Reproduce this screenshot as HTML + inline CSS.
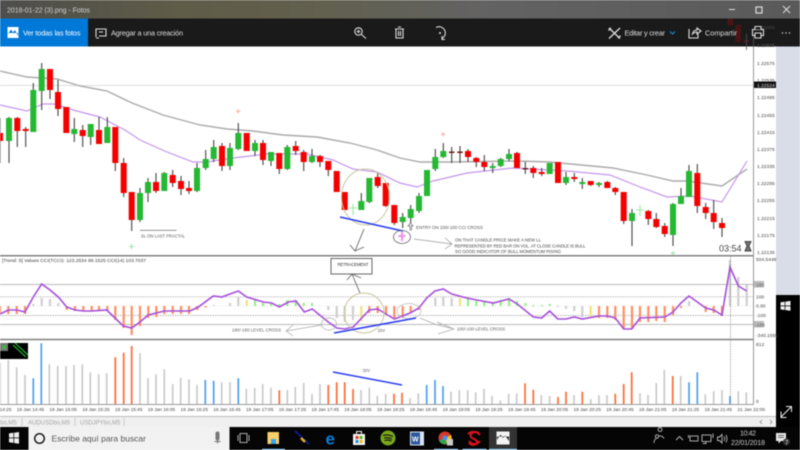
<!DOCTYPE html>
<html lang="es"><head><meta charset="utf-8"><title>2018-01-22 (3).png - Fotos</title>
<style>
html,body{margin:0;padding:0;width:800px;height:450px;overflow:hidden;background:#fff}
svg{display:block;filter:blur(.5px)}
text{font-family:"Liberation Sans",sans-serif}
</style></head><body>
<svg xmlns="http://www.w3.org/2000/svg" width="800" height="450" viewBox="0 0 800 450">
<defs><linearGradient id="tb" x1="0" x2="1" y1="0" y2="0"><stop offset="0" stop-color="#4e4e4c"/><stop offset=".22" stop-color="#5f5c48"/><stop offset=".4" stop-color="#62604e"/><stop offset=".6" stop-color="#636363"/><stop offset="1" stop-color="#5a5a5a"/></linearGradient></defs>
<rect width="800" height="450" fill="#fff"/>
<!-- side -->
<rect x="776" y="46" width="24" height="249" fill="#d9dde8"/>
<rect x="776" y="295" width="24" height="132" fill="#000"/>
<rect x="0" y="417" width="776" height="10" fill="#f0f0f0"/>
<!-- main lines -->
<path d="M0 85.5H753" stroke="#dcdcdc" stroke-width="1"/>
<polyline fill="none" stroke="#aaa" stroke-width="1.4" points="0,71 27,77 42,78 57,79 80,86 107,91 132,103 163,115 200,125 227,129 253,131 283,135 317,137 350,143 377,150 400,158 420,162 450,162 517,161 550,162 613,168 647,175 673,181 687,181 722,186 747,169"/>
<polyline fill="none" stroke="#c496ea" stroke-width="1.200" points="0,105 27,111 43,104 55,104 73,110 100,117 125,130 140,140 167,152 193,162 207,162 233,158 267,154 307,154 333,160 353,169 377,172 400,183 417,187 433,181 467,173 513,168 567,171 610,175 640,187 667,197 690,196 722,202 747,161"/>
<!-- wicks -->
<path fill="none" stroke="#444" stroke-width="1.100" d="M0 118V163M9 117V163M17.3 117V147M25.7 127V147M33.3 83V132M41.7 63V110M50 69V99M58 80V116M66.3 107V133M74.3 118V142M82.7 125V147M90.7 126V145M99 117V144M107.3 117V143M115.3 127V171M123.7 158V197M131.7 192V231M140 188V222M148 178V202M156 173V193M164.3 172V191M172.7 170V187M181 176V195M189 181V194M197 163V192M205.7 150V170M213.7 140V162M222 143V171M230 143V170M238.3 123V150M246.7 133V151M255 140V156M263 140V165M271 152V166M279.3 153V174M287.3 145V170M295.7 141V155M303.7 150V171M312 149V163M320 155V167M328.3 161V176M336.7 171V192M344.7 192V210M361.3 193V210M369.3 178V203M377.7 173V188M385.7 183V207M394.3 205V225M402.7 213V228M410.7 205V223M419 193V213M427 170V196M435.3 149V171M443.3 143V158M451.7 147V163M460 146V163M468 149V162M476.3 157V167M484.3 155V171M492.7 163V173M500.7 158V167M509 149V161M517 152V168M525.3 162V174M533.3 166V178M541.7 168V176M549.7 163V174M558 162V183M566 172V185M574.3 173V182M582.3 178V189M590.7 181V186M599 182V187M607.3 181V188M615.3 187V195M623.7 192V224M632 209V246M648.3 210V225M656.3 213V228M664.7 223V237M673 203V246M681 188V204M689 165V197M697.3 164V213M705.7 203V219M713.7 200V229M722 218V237"/>
<!-- red bodies -->
<path fill="none" stroke="#f50000" stroke-width="6" d="M0 133V141M17.3 118V131M25.7 129V131M50 69V90M58 92V109M66.3 107V133M82.7 130V136M99 130V144M115.3 127V163M123.7 163V193M131.7 192V220M156 182V191M172.7 175V183M181 181V189M189 188V191M222 146V166M246.7 133V151M263 143V160M279.3 153V169M295.7 146V151M303.7 152V162M320 156V162M328.3 161V170M336.7 171V192M344.7 192V210M377.7 177V186M385.7 183V206M394.3 205V223M468 151V157M476.3 158V162M484.3 162V167M517 153V168M533.3 168V173M541.7 172V174M558 162V183M574.3 177V179M590.7 181V185M607.3 182V188M615.3 188V192M623.7 192V221M648.3 211V219M656.3 219V227M664.7 226V234M697.3 173V206M705.7 207V213M713.7 213V222M722 223V228"/>
<!-- green bodies -->
<path fill="none" stroke="#25b832" stroke-width="6" d="M9 118V141M33.3 90V132M41.7 69V91M74.3 129V134M90.7 124V137M107.3 127V143M140 193V220M148 182V193M164.3 173V191M197 168V191M205.7 159V168M213.7 147V159M230 148V166M238.3 133V149M255 143V151M271 152V161M287.3 147V169M312 156V162M361.3 201V210M369.3 178V202M402.7 217V222M410.7 209V218M419 196V211M427 170V196M435.3 157V169M443.3 151V157M492.7 166V168M500.7 159V166M509 154V159M549.7 163V174M566 177V183M582.3 182V184M599 183V185M632 213V221M673 204V235M681 196V204M689 171V197"/>
<!-- dojis -->
<path stroke="#6b1a1a" stroke-width="5.5" d="M451.7 151.500V153M460 151.500V153M525.300 168V169.500"/>
<!-- fractals -->
<g fill="none" stroke-width="1.100">
<path stroke="#f9b7a8" d="M238 109V113.500M236 111.300H240.500M443 132V136.500M441 134.300H445.500"/>
<path stroke="#9ce89f" d="M131.500 244V249M129 246.500H134M673 251V255.500M670.500 253H675.500M353 204V215M349 208H357M640 205V216M636 210H644"/>
<path stroke="#f28ee8" stroke-width="2" d="M402 232V241M398.500 236H405.500"/>
</g>
<!-- annotations main -->
<path stroke="#555" stroke-width=".7" d="M140 230.300H176.500"/>
<text x="141" y="237.500" font-size="4.200" fill="#555" textLength="44">SL ON LAST FRACTAL</text>
<ellipse cx="365.500" cy="197" rx="24" ry="28" fill="none" stroke="#c9c69c" stroke-width="1"/>
<path stroke="#2b3cf0" stroke-width="1.600" d="M340 217L403 231"/>
<path fill="none" stroke="#666" stroke-width=".9" d="M364 229L355 251M350 245L355 251L364 247"/>
<ellipse cx="402" cy="237" rx="8.500" ry="6.500" fill="none" stroke="#666" stroke-width=".8"/>
<path fill="none" stroke="#777" stroke-width=".8" d="M410 230V226H408L410.500 223L413 226H411.500V230Z"/>
<text x="416" y="229" font-size="4.500" fill="#555" textLength="67">ENTRY ON 100/-100 CCI CROSS</text>
<path fill="none" stroke="#999" stroke-width=".7" d="M414 239L452 244M445 238L452 244L445 249"/>
<g font-size="4.300" fill="#444">
<text x="455" y="241.500" textLength="86">ON THAT CANDLE PRICE MAKE A NEW LL</text>
<text x="454.500" y="247.500" textLength="131">REPRESENTED BY RED BAR ON VOL. AT CLOSE CANDLE IS BULL</text>
<text x="455" y="253" textLength="106">SO GOOD INDICATOR OF BULL MOMENTUM RISING</text>
</g>
<text x="719" y="251.500" font-size="9" fill="#444">03:54</text>
<path d="M745 241.500H751L749 246L751 251H745L747 246Z" fill="#777" stroke="#222" stroke-width=".8"/>
<!-- indicator levels -->
<path fill="none" stroke="#bbb" stroke-width="1" d="M0 284.500H753M0 324.500H753"/>
<path fill="none" stroke="#999" stroke-width=".7" stroke-dasharray="1.500 1" d="M0 296.800H753M0 315.500H753"/>
<path fill="none" stroke="#c8c8c8" stroke-width=".5" stroke-dasharray="1 2" d="M0 306H753"/>
<!-- histogram -->
<g fill="none" stroke-width="2.200">
<path stroke="#ff8f62" d="M0 306V314M8.300 306V314M16.700 306V314M25 306V314M66.700 306V310M75 306V311M83.300 306V311M91.700 306V311M99 306V311M107.300 306V311M115.300 306V320M123.700 306V328M131.700 306V335M140 306V326M148.300 306V318M156.300 306V317M164.300 306V314M172.700 306V314M181 306V314M189 306V314M197.300 306V310M205.700 306V307.500M369.300 306V313M377.700 306V313M386 306V314M394.300 306V318M402.700 306V318M410.700 306V313M419 306V310M599 306V318M607.300 306V318M615.300 306V320M623.700 306V329M632 306V329M640 306V322M648.300 306V322M656.300 306V321M664.700 306V322M673 306V315M681 306V308M705.700 306V312M713.700 306V313M722 306V316"/>
<path stroke="#cfcfcf" d="M33.300 306V304M41.700 298V306M50 299V306M58.300 303V306M213.700 305V306M230 303V306M238.300 297V306M328.300 306V310M336.700 306V318M344.700 306V322M353 306V320M435.300 298V306M443.300 296V306M451.700 298V306M558 306V307M566 306V309M574.300 306V311M582.300 306V317M689 301V306M730 260V306M738.300 277V306M746.700 285V306"/>
<path stroke="#f4e07c" d="M246.700 300V306M361.300 306V321M460 298V306M590.700 306V317"/>
<path stroke="#93ee84" d="M255 300V306M263 303V306M271 304V306M279.300 304V306M287.300 300V306M295.700 300V306M303.700 303V306M312 303V306M468 298V306M476.300 301V306M484.300 302V306M492.700 302V306M500.700 300V306M509 298V306M517 301V306M525.300 303V306M533.300 305V306M541.700 305V306M549.700 304V306"/>
</g>
<polyline fill="none" stroke="#a64fdc" stroke-width="1.600" points="0,314 8.300,310 16.700,310 25,312 33.300,297 41.700,284 50,290 58.300,297 66.700,307 75,310 83.300,311 91.700,311 106.700,310 115,318 123.300,326 131.700,328 140,322 148.300,315 164.300,311 180,311 190,311 198.300,307 213.300,296 221.700,297 238.300,291 246.700,297 263.300,302 271.700,303 279.300,307 288.300,302 296,301 304.300,312 312.300,309 328.300,322 336.700,328 344.700,329 353.300,327 361.700,318 369.300,310 377.700,309 386,314 394.300,319 400,317 410,313 419,308 426.700,298 435,291 443.300,289 451.700,294 466.700,298 476.700,300 493.300,303 509,299 517.300,304 533.300,317 541.700,318 549.700,311 557.700,319 566,319 574.300,317 582.300,319 599,316 607.300,316 615.300,318 623.700,329 631.700,329 640,318 665,317 673,312 681,303 689,296 697.300,302 705.700,308 713.700,310 722,315 730,267 738.300,286 746.700,291"/>
<!-- indicator annotations -->
<text x="2" y="262" font-size="4.800" fill="#333" textLength="144">[Trend: 5] Values CCI(TCCI): 123.2534 99.1525  CCI(14) 103.7037</text>
<rect x="331" y="258.500" width="41" height="15.500" fill="#fff" stroke="#666" stroke-width="1"/>
<text x="337.500" y="266" font-size="4.300" fill="#333" textLength="31">RETRACEMENT</text>
<path fill="none" stroke="#666" stroke-width=".9" d="M360 293L352 274M347 280L352 274L361 278"/>
<ellipse cx="364" cy="313" rx="20" ry="20" fill="none" stroke="#c9c69c" stroke-width="1"/>
<ellipse cx="329" cy="324" rx="7.500" ry="6" fill="none" stroke="#aaa" stroke-width=".7"/>
<ellipse cx="409" cy="311" rx="12" ry="7.500" fill="none" stroke="#bbb" stroke-width=".7"/>
<path stroke="#2b3cf0" stroke-width="1.600" d="M334 333L416 318"/>
<text x="378" y="332" font-size="4.200" fill="#555">DIV</text>
<path fill="none" stroke="#aaa" stroke-width=".7" d="M322 325L286 331M293 325L286 331L293 336"/>
<text x="232" y="331.500" font-size="4.200" fill="#555" textLength="49">180/-180 LEVEL CROSS</text>
<path fill="none" stroke="#aaa" stroke-width=".7" d="M420 318L436 324.500L454 329M437 322L454 329L438 334"/>
<text x="457" y="330.500" font-size="4.200" fill="#555" textLength="48">100/-100 LEVEL CROSS</text>
<!-- volume -->
<g fill="none" stroke-width="1.700">
<path stroke="#cacaca" d="M0 404V362.700M8.300 404V360M16.700 404V367.300M25 404V375M49.300 404V364.300M57.700 404V366M66 404V366M74 404V365M82.300 404V364.300M90.300 404V372.300M98.700 404V374.300M106.700 404V373.300M140 404V353.300M148 404V378.300M156 404V374.300M164.300 404V369.300M172.700 404V384M180.700 404V377.700M189 404V379.300M197 404V385M221.700 404V382.300M230 404V382M246.300 404V388.700M254.700 404V388M262.700 404V384M271 404V387.700M287.300 404V390M295.300 404V387M303.700 404V383M312 404V394M320 404V384M361 404V390M369.300 404V387.700M377.300 404V395.700M385.700 404V394M410 404V398.300M418.300 404V393.300M451 404V391.700M459.300 404V390.300M467.700 404V390.300M475.700 404V392.300M484 404V388.700M492 404V396M500.300 404V400.300M508.700 404V393.700M516.700 404V393.300M541.300 404V395M549.700 404V396M574 404V395M590.700 404V399M599 404V395.300M607 404V395M640 404V393.300M648 404V395M656.300 404V383M664.300 404V370M680.700 404V376M705.300 404V394.300M713.700 404V391.300M722 404V390M738.300 404V391.300M746.300 404V392.300"/>
<path stroke="#4d9ff0" d="M33.300 404V378.300M41.300 404V343.300M205.300 404V380M213.700 404V380.700M238.300 404V378.300M426.700 404V385M435 404V380M443 404V386M689 404V382.300M697.300 404V372.300M730 404V396"/>
<path stroke="#ff6a35" d="M115.300 404V357.300M123.700 404V352.700M131.700 404V346M279.300 404V390.300M328.300 404V385M336.700 404V382.300M344.700 404V382.300M353 404V389M394 404V393.700M402 404V392.700M525 404V383.300M533.300 404V389.700M558 404V397M566 404V391.700M582.300 404V391.700M615.300 404V393.700M623.700 404V384M631.700 404V372.300M672.700 404V376"/>
</g>
<path stroke="#2b3cf0" stroke-width="1.500" d="M333 372L402 385"/>
<text x="363" y="372" font-size="4.200" fill="#555">DIV</text>
<rect x="0" y="343" width="28" height="16" fill="#000"/>
<rect x="0" y="343" width="8" height="8" fill="#777"/>
<path stroke="#29d036" stroke-width="1" fill="none" d="M2 345L6 349M6 345L2 349M13 345L26 357M15 343L28 355"/>
<!-- frames -->
<path fill="none" stroke="#808080" stroke-width="1.500" d="M0 255.700H753M0 339.500H753"/>
<path fill="none" stroke="#999" stroke-width="1" d="M753.500 46V404.500M0 404.500H753.500"/>
<path stroke="#bbb" stroke-width="1" d="M0 416.500H776"/>
<path stroke="#777" stroke-width=".6" stroke-dasharray="1.500 1" d="M730.500 256V404"/>
<!-- axis labels -->
<g font-size="4.900" fill="#444">
<text x="757" y="65">1.22575</text><text x="757" y="82">1.22535</text><text x="757" y="99">1.22495</text><text x="757" y="117">1.22455</text>
<text x="757" y="134">1.22415</text><text x="757" y="151">1.22375</text><text x="757" y="168">1.22335</text><text x="757" y="185">1.22295</text><text x="757" y="202">1.22255</text><text x="757" y="220">1.22215</text><text x="757" y="237">1.22175</text><text x="757" y="254">1.22135</text>
<text x="756" y="261">504.5448</text><text x="756" y="298.500">100</text><text x="756" y="307.500">0.00</text><text x="756" y="317">-100</text><text x="756" y="337">-340.1555</text><text x="756" y="346">812</text><text x="756" y="403">0</text>
</g>
<rect x="754" y="81.500" width="22" height="6.500" fill="#111"/>
<text x="757" y="87" font-size="4.900" fill="#ddd">1.22524</text>
<rect x="754" y="281" width="10" height="6.500" fill="#bbb"/><text x="756" y="286.300" font-size="4.900" fill="#666">180</text>
<rect x="754" y="321" width="10" height="6.500" fill="#bbb"/><text x="755" y="326.300" font-size="4.900" fill="#666">-180</text>
<!-- time labels -->
<g font-size="4.750" fill="#444">
<text x="-16" y="411">19 Jan 14:25</text><text x="16.700" y="411">19 Jan 14:45</text><text x="49.400" y="411">19 Jan 15:05</text><text x="82.200" y="411">19 Jan 15:25</text><text x="115" y="411">19 Jan 15:45</text><text x="147.700" y="411">19 Jan 16:05</text><text x="180.500" y="411">19 Jan 16:25</text><text x="213.200" y="411">19 Jan 16:45</text><text x="246" y="411">19 Jan 17:05</text><text x="278.700" y="411">19 Jan 17:25</text><text x="311.500" y="411">19 Jan 17:45</text><text x="344.200" y="411">19 Jan 18:05</text><text x="377" y="411">19 Jan 18:25</text><text x="409.700" y="411">19 Jan 18:45</text><text x="442.500" y="411">19 Jan 19:05</text><text x="475.200" y="411">19 Jan 19:25</text><text x="508" y="411">19 Jan 19:45</text><text x="540.700" y="411">19 Jan 20:05</text><text x="573.500" y="411">19 Jan 20:25</text><text x="606.200" y="411">19 Jan 20:45</text><text x="639" y="411">19 Jan 21:05</text><text x="671.700" y="411">19 Jan 21:25</text><text x="704.500" y="411">19 Jan 21:45</text><text x="737.500" y="411">21 Jan 22:05</text>
</g>
<!-- tabs -->
<g font-size="6" fill="#a5a5a5">
<text x="0" y="424.500">bo,M5</text><text x="28" y="424.500">AUDUSDbo,M5</text><text x="80" y="424.500">USDJPYbo,M5</text>
</g>
<path stroke="#bbb" stroke-width=".7" d="M22 418V426M75 418V426M124 418V426"/>
<path fill="none" stroke="#888" stroke-width=".8" d="M762 420L760 422L762 424M770 420L772 422L770 424"/>
<!-- title bar -->
<rect width="800" height="18.500" fill="url(#tb)"/>
<text x="7" y="12.500" font-size="7" fill="#d2d2d2" textLength="83">2018-01-22 (3).png - Fotos</text>
<path stroke="#ddd" stroke-width="1" d="M729 9.500H735"/>
<rect x="756" y="7" width="6" height="6" fill="none" stroke="#ddd" stroke-width="1.200"/>
<path stroke="#ddd" stroke-width="1" d="M783 6L790 13M790 6L783 13"/>
<!-- toolbar -->
<rect y="18.500" width="800" height="28" fill="#1a1a1a"/>
<!-- candles bleeding through toolbar -->
<rect x="727.500" y="18.500" width="5.500" height="7" fill="#4a1414"/>
<rect x="735.500" y="25" width="5.500" height="17" fill="#4a1414"/>
<rect x="743.500" y="40.500" width="6" height="1.500" fill="#5a1a1a"/>
<path stroke="#555" stroke-width=".8" d="M746.500 34V50M753.500 36V46"/>
<text x="757" y="29" font-size="4.900" fill="#4a4a4a">1.22655</text>
<text x="757" y="47" font-size="4.900" fill="#666">1.22615</text>
<rect y="18.500" width="88" height="28" fill="#0078d7"/>
<rect x="7.500" y="27" width="11" height="11" fill="#fff"/>
<path d="M8 34L11 29.500L13 32.500L15 30L18 36V33H8Z" fill="#0078d7"/>
<text x="23" y="35.500" font-size="7.300" fill="#fff" textLength="57.500">Ver todas las fotos</text>
<path fill="none" stroke="#ddd" stroke-width="1.100" d="M96 37V29H106V36H99M99 32H103M96 38H99"/>
<text x="111" y="35.500" font-size="7.300" fill="#ddd" textLength="72">Agregar a una creación</text>
<g fill="none" stroke="#ddd" stroke-width="1.100">
<circle cx="358.500" cy="31.500" r="3.700"/><path d="M361.500 34.500L366 38.500M358.500 29.700V33.300M356.700 31.500H360.300"/>
<path d="M395 29H404M396 29V38H403V29M398 27H401M398.500 31V36M400.500 31V36"/>
<path d="M436 27.500A6 6 0 1 1 442 38.500M442 36V39.500H445"/><circle cx="440" cy="33" r="1" fill="#ddd" stroke="none"/>
<path stroke-width="1.300" d="M609 28L620 38.500M620 28L609 38.500M608.500 30.500L611 28M618 38L620.500 35.800"/>
<path d="M689 29V38H698V34M692.500 34C693 31 695 30 697 30V28L701 31L697 34V32C695 32 693.500 33 692.500 34Z"/>
</g>
<text x="624.500" y="35.500" font-size="7.300" fill="#ddd" textLength="40.500">Editar y crear</text>
<path fill="none" stroke="#1a8ad4" stroke-width="1.200" d="M670 31.500L672.500 34L675 31.500"/>
<text x="705" y="35.500" font-size="7.300" fill="#ddd" textLength="32">Compartir</text>
<g fill="none" stroke="#ddd" stroke-width="1.100">
<rect x="752.500" y="29.500" width="11" height="6" fill="#1a1a1a"/>
<path d="M755 29.500V26.500H761V29.500M755 33V38H761V33Z" fill="#1a1a1a"/>
</g>
<g fill="#ddd"><circle cx="782.500" cy="33" r=".7"/><circle cx="786" cy="33" r=".7"/><circle cx="789.500" cy="33" r=".7"/></g>
<!-- side icons -->
<path fill="#eee" d="M780.500 302.300L784.700 301.700V305.500H780.500ZM785.400 301.600L790.500 300.900V305.500H785.400ZM780.500 306.200H784.700V310L780.500 309.400ZM785.400 306.200H790.500V310.800L785.400 310.100Z"/>
<path fill="none" stroke="#eee" stroke-width="1" d="M781 417L791 407M786 406.500H791.500V412M781 411.500V417.500H786.500"/>
<!-- taskbar -->
<rect y="427" width="800" height="23" fill="#050505"/>
<path fill="#eee" d="M9 433.400L13.400 432.800V437.500H9ZM14.100 432.700L19 432V437.500H14.100ZM9 438.200H13.400V442.900L9 442.300ZM14.100 438.200H19V443.700L14.100 443Z"/>
<rect x="28.500" y="427" width="201" height="23" fill="#f2f2f2"/>
<circle cx="39.500" cy="438.500" r="4.800" fill="none" stroke="#111" stroke-width="1.400"/>
<text x="51.500" y="441.500" font-size="8.500" fill="#555" textLength="94.500">Escribe aquí para buscar</text>
<path fill="#777" d="M215.500 433.500a2 2 0 0 1 4 0v5a2 2 0 0 1-4 0z"/><path fill="none" stroke="#777" d="M214.500 441.500H220.500M217.500 440V443.500"/>
<rect x="240" y="433.500" width="7" height="9" fill="none" stroke="#aaa" stroke-width="1"/><path fill="none" stroke="#aaa" d="M238 435V441M249 435V441"/>
<path fill="#f6cf68" d="M267.500 432H279V444H267.500Z"/><path fill="#38a6e8" d="M271 439H276V444H271Z"/><rect x="262" y="448.800" width="23" height="1.200" fill="#8ac4f0"/>
<path stroke="#1424c0" stroke-width="1.200" d="M295 431L309 444"/><path stroke="#e8b020" stroke-width="2.400" d="M301 438L305 442"/>
<text x="325.500" y="444.500" font-size="17" font-weight="bold" fill="#0a7fd8">e</text>
<path fill="#f4f4f4" d="M353 434H365V445H353Z"/><path fill="none" stroke="#f4f4f4" d="M356.500 434V431.500H361.500V434"/>
<rect x="355.500" y="436" width="3" height="3" fill="#e53a22"/><rect x="359.500" y="436" width="3" height="3" fill="#5cb81c"/><rect x="355.500" y="440" width="3" height="3" fill="#1890e0"/><rect x="359.500" y="440" width="3" height="3" fill="#f4b808"/>
<circle cx="388" cy="438" r="7.500" fill="#7aa81c"/><path fill="none" stroke="#111" stroke-width="1.100" d="M383 435.500Q388 434 393 436.500M384 438Q388 437 392 439M384.500 440.500Q388 439.500 391.500 441"/>
<rect x="410" y="431.500" width="14" height="14" fill="#d8e4f4"/><rect x="411" y="432.500" width="9" height="12" fill="#2b579a"/><text x="412" y="441.500" font-size="7" font-weight="bold" fill="#fff">W</text>
<circle cx="445" cy="438" r="6.500" fill="#d8392c"/><path d="M445 438L451 435A6.500 6.500 0 0 1 447 444Z" fill="#f4c20d"/><path d="M445 438L447 444A6.500 6.500 0 0 1 439 440.500Z" fill="#2ea84f"/><circle cx="445" cy="438" r="2.500" fill="#4a8cf0"/><rect x="447" y="439" width="6" height="6.500" fill="#ccc"/>
<rect x="434" y="448.800" width="24" height="1.200" fill="#8ac4f0"/>
<path fill="none" stroke="#d8141c" stroke-width="2" d="M479 433C473 430 468 435 472 438C476 440 479 441 476 444C473 446 470 444 469 443M468 434C471 431 477 431 480 435M469 441C472 445 477 445 480 441"/>
<rect x="462.500" y="448.800" width="24" height="1.200" fill="#8ac4f0"/>
<rect x="489" y="427" width="28" height="23" fill="#333"/>
<rect x="496.500" y="431.500" width="13" height="13" fill="#f4f4f4"/><path d="M497 440L500.500 434.500L503 438L505 435.500L509 441V436.500H497Z" fill="#333"/>
<rect x="489" y="448.800" width="28" height="1.200" fill="#8ac4f0"/>
<!-- tray -->
<g fill="none" stroke="#bbb" stroke-width=".9">
<circle cx="657" cy="436.500" r="1.700"/><path d="M654 443C654 440 655 439 656.500 438.500M660 431.500a2 2 0 1 1 .1 0M658 436C660 435.500 663 436 664 438.500"/>
<path d="M676 440L679.500 436.500L683 440"/>
<rect x="690" y="436" width="8" height="5"/><path d="M688.500 435V438"/>
<rect x="702" y="435" width="9" height="6.500"/><path d="M706 441.500V443.500H703M713 433.500V438"/>
<path d="M717.500 437H719.500L722 434.500V443L719.500 440.500H717.500ZM724 436.500Q725.500 438.700 724 441M726 435Q728 438.700 726 442.500"/>
</g>
<text x="748" y="435.500" font-size="7" fill="#ccc" text-anchor="middle" textLength="16">10:42</text>
<text x="748" y="445" font-size="7" fill="#ccc" text-anchor="middle" textLength="34">22/01/2018</text>
<path fill="#e8e8e8" d="M776 433H786V441H781L778.500 443.500V441H776Z"/>
<path stroke="#444" stroke-width=".8" d="M778 435.500H784M778 437.500H784"/>
<circle cx="786.500" cy="442" r="3.500" fill="#333"/><text x="785" y="444.500" font-size="6" fill="#ddd">7</text>
</svg>
</body></html>
